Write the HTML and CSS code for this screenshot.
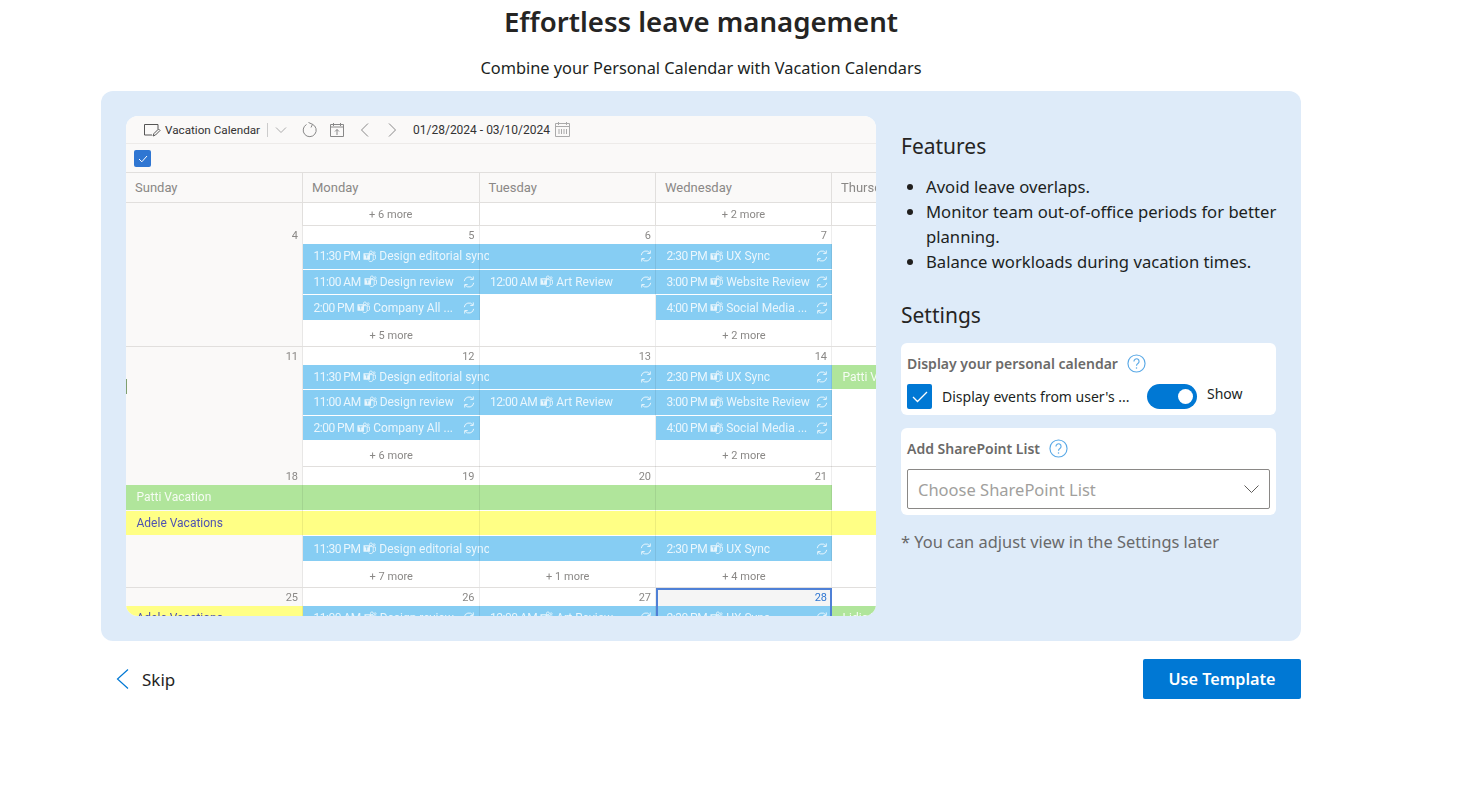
FILE: index.html
```html
<!DOCTYPE html>
<html lang="en">
<head>
    <meta charset="UTF-8">
    <title>Effortless leave management</title>
    <link rel="stylesheet" href="styles.css">
</head>
<body>
    <svg class="defs" width="0" height="0">
        <symbol id="teams" viewBox="0 0 14 14">
            <rect x="0.500" y="3.500" width="7" height="7" fill="currentColor"/>
            <path d="M2 5.200h4M4 5.200v3.800" fill="none" stroke="#86cdf3" stroke-width=".9"/>
            <path d="M7.500 5h3.500v5a2.700 2.700 0 0 1-5 1.200M11 5.500h2.500V9a1.500 1.500 0 0 1-2.500 1" fill="none" stroke="currentColor" stroke-width=".9"/>
            <circle cx="8.500" cy="2.500" r="1.500" fill="none" stroke="currentColor" stroke-width=".9"/>
            <circle cx="12" cy="3" r="1.100" fill="none" stroke="currentColor" stroke-width=".8"/>
        </symbol>
        <symbol id="sync" viewBox="0 0 14 14">
            <path d="M1.500 6a5.500 5.500 0 0 1 10-2.500M12.500 8a5.500 5.500 0 0 1-10 2.500" fill="none" stroke="currentColor" stroke-width="1.100"/>
            <path d="M12 .5v3.500H8.500M2 13.500V10h3.500" fill="none" stroke="currentColor" stroke-width="1.100"/>
        </symbol>
        <symbol id="help" viewBox="0 0 20 20">
            <circle cx="10" cy="10" r="9" fill="none" stroke="#5aa9e6" stroke-width="1.200"/>
            <path d="M7.300 7.800a2.700 2.700 0 1 1 4.200 2.200c-1 .7-1.500 1.100-1.500 2.300" fill="none" stroke="#5aa9e6" stroke-width="1.200"/>
            <circle cx="10" cy="14.800" r=".8" fill="#5aa9e6"/>
        </symbol>
    </svg>

    <main class="page">
        <h1 class="title">Effortless leave management</h1>
        <p class="subtitle">Combine your Personal Calendar with Vacation Calendars</p>

        <section class="panel">
            <div class="calendar">
                <div class="toolbar">
                    <svg class="tool-icon" width="18" height="16" viewBox="0 0 18 16"><path d="M15 7V2.500H1.500V13H9M10 14l1-2.500 4.500-4.500 1.500 1.500-4.500 4.500z" fill="none" stroke="#555"/></svg>
                    <span class="view-name">Vacation Calendar</span>
                    <span class="tool-sep"></span>
                    <svg class="tool-icon" width="12" height="8" viewBox="0 0 12 8"><path d="M1 1.500l5 5 5-5" fill="none" stroke="#aaa"/></svg>
                    <svg class="tool-icon refresh" width="15" height="16" viewBox="0 0 15 16"><path d="M4.500 2.500a6.500 6.500 0 1 0 6-.2M6.500 .5L10.500 2.300 9 5.500" fill="none" stroke="#888"/></svg>
                    <svg class="tool-icon today" width="14" height="14" viewBox="0 0 14 14"><path d="M.5 1.500h13v12H.5zM.5 4h13M3.500 0v3M10.500 0v3M7 12V6.500M5 8.500l2-2 2 2" fill="none" stroke="#888"/></svg>
                    <svg class="tool-icon prev" width="9" height="14" viewBox="0 0 9 14"><path d="M8 .5L1.500 7 8 13.500" fill="none" stroke="#888"/></svg>
                    <svg class="tool-icon next" width="9" height="14" viewBox="0 0 9 14"><path d="M1 .5L7.500 7 1 13.500" fill="none" stroke="#888"/></svg>
                    <span class="range">01/28/2024 - 03/10/2024</span>
                    <svg class="tool-icon" width="15" height="15" viewBox="0 0 15 15"><path d="M.5 1.500h14v13H.5zM.5 4.500h14M3.500 0v3M11.500 0v3M4 7v5M6.500 7v5M9 7v5M11.500 7v5" fill="none" stroke="#aaa"/></svg>
                </div>
                <div class="checkbar">
                    <span class="mini-check"><svg width="10" height="8" viewBox="0 0 10 8"><path d="M1 4l2.800 2.800L9 1" fill="none" stroke="#fff"/></svg></span>
                </div>
                <div class="headers">
                    <div class="head">Sunday</div>
                    <div class="head">Monday</div>
                    <div class="head">Tuesday</div>
                    <div class="head">Wednesday</div>
                    <div class="head">Thursday</div>
                </div>

                <div class="overflow-row">
                    <div class="cell side"></div>
                    <div class="cell more">+ 6 more</div>
                    <div class="cell"></div>
                    <div class="cell more">+ 2 more</div>
                    <div class="cell"></div>
                </div>

                <div class="week">
                    <div class="col c1 side"></div><div class="col c2"></div><div class="col c3"></div><div class="col c4"></div><div class="col c5"></div>
                    <div class="num c1">4</div><div class="num c2">5</div><div class="num c3">6</div><div class="num c4">7</div>
                    <div class="ev blue c2 w2 r1"><span class="ev-text span-text"><span class="time">11:30 PM</span> <svg class="ti"><use href="#teams"/></svg> Design editorial sync</span><svg class="si"><use href="#sync"/></svg></div>
                    <div class="ev blue c4 r1"><span class="ev-text"><span class="time">2:30 PM</span> <svg class="ti"><use href="#teams"/></svg> UX Sync</span><svg class="si"><use href="#sync"/></svg></div>
                    <div class="ev blue c2 r2"><span class="ev-text"><span class="time">11:00 AM</span> <svg class="ti"><use href="#teams"/></svg> Design review</span><svg class="si"><use href="#sync"/></svg></div>
                    <div class="ev blue c3 r2"><span class="ev-text"><span class="time">12:00 AM</span> <svg class="ti"><use href="#teams"/></svg> Art Review</span><svg class="si"><use href="#sync"/></svg></div>
                    <div class="ev blue c4 r2"><span class="ev-text"><span class="time">3:00 PM</span> <svg class="ti"><use href="#teams"/></svg> Website Review</span><svg class="si"><use href="#sync"/></svg></div>
                    <div class="ev blue c2 r3"><span class="ev-text"><span class="time">2:00 PM</span> <svg class="ti"><use href="#teams"/></svg> Company All ...</span><svg class="si"><use href="#sync"/></svg></div>
                    <div class="ev blue c4 r3"><span class="ev-text"><span class="time">4:00 PM</span> <svg class="ti"><use href="#teams"/></svg> Social Media ...</span><svg class="si"><use href="#sync"/></svg></div>
                    <div class="more c2 r4">+ 5 more</div><div class="more c4 r4">+ 2 more</div>
                    <div class="line c1"></div><div class="line c2"></div><div class="line c3"></div><div class="line c4"></div>
                </div>

                <div class="week">
                    <div class="col c1 side"></div><div class="col c2"></div><div class="col c3"></div><div class="col c4"></div><div class="col c5"></div>
                    <div class="num c1">11</div><div class="num c2">12</div><div class="num c3">13</div><div class="num c4">14</div>
                    <div class="ev blue c2 w2 r1"><span class="ev-text span-text"><span class="time">11:30 PM</span> <svg class="ti"><use href="#teams"/></svg> Design editorial sync</span><svg class="si"><use href="#sync"/></svg></div>
                    <div class="ev blue c4 r1"><span class="ev-text"><span class="time">2:30 PM</span> <svg class="ti"><use href="#teams"/></svg> UX Sync</span><svg class="si"><use href="#sync"/></svg></div>
                    <div class="ev green c5 r1"><span class="ev-text">Patti Vacation</span></div>
                    <div class="ev blue c2 r2"><span class="ev-text"><span class="time">11:00 AM</span> <svg class="ti"><use href="#teams"/></svg> Design review</span><svg class="si"><use href="#sync"/></svg></div>
                    <div class="ev blue c3 r2"><span class="ev-text"><span class="time">12:00 AM</span> <svg class="ti"><use href="#teams"/></svg> Art Review</span><svg class="si"><use href="#sync"/></svg></div>
                    <div class="ev blue c4 r2"><span class="ev-text"><span class="time">3:00 PM</span> <svg class="ti"><use href="#teams"/></svg> Website Review</span><svg class="si"><use href="#sync"/></svg></div>
                    <div class="ev blue c2 r3"><span class="ev-text"><span class="time">2:00 PM</span> <svg class="ti"><use href="#teams"/></svg> Company All ...</span><svg class="si"><use href="#sync"/></svg></div>
                    <div class="ev blue c4 r3"><span class="ev-text"><span class="time">4:00 PM</span> <svg class="ti"><use href="#teams"/></svg> Social Media ...</span><svg class="si"><use href="#sync"/></svg></div>
                    <div class="more c2 r4">+ 6 more</div><div class="more c4 r4">+ 2 more</div>
                    <div class="line c1"></div><div class="line c2"></div><div class="line c3"></div><div class="line c4"></div>
                </div>

                <div class="week">
                    <div class="col c1 side"></div><div class="col c2"></div><div class="col c3"></div><div class="col c4"></div><div class="col c5"></div>
                    <div class="num c1">18</div><div class="num c2">19</div><div class="num c3">20</div><div class="num c4">21</div>
                    <div class="ev green c1 w4 r1"><span class="ev-text">Patti Vacation</span></div>
                    <div class="ev yellow c1 w5 r2"><span class="ev-text">Adele Vacations</span></div>
                    <div class="ev blue c2 w2 r3"><span class="ev-text span-text"><span class="time">11:30 PM</span> <svg class="ti"><use href="#teams"/></svg> Design editorial sync</span><svg class="si"><use href="#sync"/></svg></div>
                    <div class="ev blue c4 r3"><span class="ev-text"><span class="time">2:30 PM</span> <svg class="ti"><use href="#teams"/></svg> UX Sync</span><svg class="si"><use href="#sync"/></svg></div>
                    <div class="more c2 r4">+ 7 more</div><div class="more c3 r4">+ 1 more</div><div class="more c4 r4">+ 4 more</div>
                    <div class="line c1"></div><div class="line c2"></div><div class="line c3"></div><div class="line c4"></div>
                </div>

                <div class="week">
                    <div class="col c1 side"></div><div class="col c2"></div><div class="col c3"></div><div class="col c4"></div><div class="col c5"></div>
                    <div class="num c1">25</div><div class="num c2">26</div><div class="num c3">27</div><div class="num c4 today-num">28</div>
                    <div class="ev yellow c1 r1"><span class="ev-text">Adele Vacations</span></div>
                    <div class="ev blue c2 r1"><span class="ev-text"><span class="time">11:00 AM</span> <svg class="ti"><use href="#teams"/></svg> Design review</span><svg class="si"><use href="#sync"/></svg></div>
                    <div class="ev blue c3 r1"><span class="ev-text"><span class="time">12:00 AM</span> <svg class="ti"><use href="#teams"/></svg> Art Review</span><svg class="si"><use href="#sync"/></svg></div>
                    <div class="ev blue c4 r1"><span class="ev-text"><span class="time">2:30 PM</span> <svg class="ti"><use href="#teams"/></svg> UX Sync</span><svg class="si"><use href="#sync"/></svg></div>
                    <div class="ev green c5 r1"><span class="ev-text">Lidia Vacation</span></div>
                    <div class="line c1"></div><div class="line c2"></div><div class="line c3"></div>
                    <div class="today-box c4"></div>
                </div>
                <span class="edge-mark"></span>
            </div>

            <div class="side-panel">
                <h2 class="side-title">Features</h2>
                <ul class="features">
                    <li>Avoid leave overlaps.</li>
                    <li>Monitor team out-of-office periods for better planning.</li>
                    <li>Balance workloads during vacation times.</li>
                </ul>
                <h2 class="side-title settings-title">Settings</h2>
                <div class="setting first-setting">
                    <div class="setting-label">Display your personal calendar <svg class="help"><use href="#help"/></svg></div>
                    <div class="setting-row">
                        <span class="check"><svg width="16" height="12" viewBox="0 0 16 12"><path d="M1 6l4.500 4.500L15 1" fill="none" stroke="#fff" stroke-width="1.300"/></svg></span>
                        <span class="check-label">Display events from user's ...</span>
                        <span class="toggle"><span class="knob"></span></span>
                        <span class="toggle-label">Show</span>
                    </div>
                </div>
                <div class="setting second-setting">
                    <div class="setting-label">Add SharePoint List <svg class="help"><use href="#help"/></svg></div>
                    <div class="select">
                        <span>Choose SharePoint List</span>
                        <svg width="15" height="8" viewBox="0 0 15 8"><path d="M.5 .5l7 7 7-7" fill="none" stroke="#605e5c"/></svg>
                    </div>
                </div>
                <p class="note">* You can adjust view in the Settings later</p>
            </div>
        </section>

        <div class="footer">
            <a class="skip">
                <svg width="13" height="20" viewBox="0 0 13 20"><path d="M12 .5L1.500 10 12 19.500" fill="none" stroke="#0078d4" stroke-width="1.200"/></svg>
                Skip
            </a>
            <button class="use-btn">Use Template</button>
        </div>
    </main>
</body>
</html>
```

FILE: styles.css
```css
* {
    box-sizing: border-box;
}
html, body {
    margin: 0;
    padding: 0;
    height: 100%;
    overflow: hidden;
    background: #fff;
}
body {
    font-family: "Noto Sans", "Open Sans", sans-serif;
    color: #201f1e;
}
.defs {
    position: absolute;
}
.page {
    width: 1200px;
    margin-left: 101px;
}
.title {
    margin: 0;
    height: 43px;
    line-height: 43px;
    font-size: 27.600px;
    font-weight: 600;
    text-align: center;
    color: #252423;
}
.subtitle {
    margin: 0;
    padding-top: 14px;
    height: 48px;
    line-height: 22px;
    font-size: 16.330px;
    text-align: center;
}
.panel {
    display: flex;
    gap: 25px;
    height: 550px;
    padding: 25px;
    background: #deebf9;
    border-radius: 12px;
}

/* calendar picture */
.calendar {
    width: 750px;
    height: 500px;
    flex: none;
    position: relative;
    overflow: hidden;
    border-radius: 12px;
    background: #fff;
    font-family: Roboto, "Noto Sans", sans-serif;
    font-size: 12px;
    color: #666;
    filter: blur(.35px);
}
.toolbar {
    display: flex;
    align-items: center;
    height: 28px;
    padding-left: 17px;
    background: #faf9f8;
    border-bottom: 1px solid #edebe9;
    color: #333;
    font-size: 12px;
}
.tool-icon {
    flex: none;
}
.view-name {
    margin-left: 4px;
    width: 96px;
    font-size: 11.700px;
    white-space: nowrap;
}
.tool-sep {
    width: 1px;
    height: 14px;
    margin: 0 7px 0 6px;
    background: #ccc;
}
.refresh {
    margin-left: 15px;
}
.today {
    margin-left: 13px;
}
.prev {
    margin-left: 16px;
}
.next {
    margin-left: 19px;
}
.range {
    width: 136px;
    margin: 0 6px 0 16px;
    white-space: nowrap;
}
.checkbar {
    height: 29px;
    padding: 6px 0 0 8px;
    background: #faf9f8;
    border-bottom: 1px solid #e1dfdd;
}
.mini-check {
    display: flex;
    align-items: center;
    justify-content: center;
    width: 17px;
    height: 17px;
    border-radius: 2px;
    background: #2f76d2;
}
.headers, .overflow-row {
    display: grid;
    grid-template-columns: 177px 176.500px 176.500px 176px 44px;
}
.headers {
    height: 30px;
    background: #faf9f8;
    border-bottom: 1px solid #e1dfdd;
}
.head {
    padding: 7px 0 0 9px;
    font-size: 13px;
    color: #8a8886;
    border-right: 1px solid #e1dfdd;
    white-space: nowrap;
    overflow: hidden;
}
.head:last-child {
    border-right: none;
}
.overflow-row {
    height: 23px;
    border-bottom: 1px solid #e1dfdd;
}
.cell {
    border-right: 1px solid #e1dfdd;
}
.cell:last-child {
    border-right: none;
}
.side {
    background: #faf9f8;
}
.more {
    font-size: 11px;
    line-height: 23px;
    text-align: center;
    color: #8a8886;
}
.more.r4 {
    padding-top: 3px;
}
.week {
    display: grid;
    grid-template-columns: 177px 176.500px 176.500px 176px 44px;
    grid-template-rows: 18px 25.670px 25.670px 25.670px 25.500px;
    height: 120.500px;
    border-bottom: 1px solid #e1dfdd;
}
.col, .line {
    grid-row: 1 / -1;
}
.line {
    border-right: 1px solid rgba(0, 0, 0, .07);
}
.num {
    grid-row: 1;
    padding: 3px 5px 0 0;
    text-align: right;
    font-size: 11px;
    line-height: 14px;
    color: #8a8886;
}
.c1 { grid-column: 1; }
.c2 { grid-column: 2; }
.c3 { grid-column: 3; }
.c4 { grid-column: 4; }
.c5 { grid-column: 5; }
.w2 { grid-column-end: span 2; }
.w4 { grid-column-end: span 4; }
.w5 { grid-column-end: span 5; }
.r1 { grid-row: 2; }
.r2 { grid-row: 3; }
.r3 { grid-row: 4; }
.r4 { grid-row: 5; }
.ev {
    display: flex;
    align-items: center;
    justify-content: space-between;
    height: 24.670px;
    padding: 0 4.500px 0 10.500px;
    font-size: 12px;
    white-space: nowrap;
    overflow: hidden;
}
.ev-text {
    display: block;
    flex: none;
}
.span-text {
    width: 175.500px;
    overflow: hidden;
}
.time {
    letter-spacing: -.5px;
}
.blue {
    background: #86cdf3;
    color: rgba(255, 255, 255, .82);
}
.green {
    background: #b0e59b;
    color: rgba(255, 255, 255, .88);
}
.yellow {
    background: #ffff85;
    color: #4f52b2;
}
.ti {
    width: 13px;
    height: 13px;
    vertical-align: -2.500px;
}
.si {
    flex: none;
    width: 12px;
    height: 12px;
    color: #fff;
    opacity: .85;
    margin-left: auto;
}
.today-num {
    color: #2f76d2;
    background: #f5f5f5;
}
.today-box {
    grid-row: 1 / -1;
    border: 2px solid #4f80d6;
    border-bottom: none;
    pointer-events: none;
}
.edge-mark {
    position: absolute;
    left: 0;
    top: 263px;
    width: 1px;
    height: 15px;
    background: #7f9f6f;
}

/* right column */
.side-panel {
    flex: 1;
    min-width: 0;
}
.side-title {
    margin: 16px 0 0;
    font-size: 21px;
    line-height: 28px;
    font-weight: 400;
    color: #252423;
}
.features {
    margin: 14px -6px 0 0;
    padding-left: 25px;
    font-size: 16.650px;
    line-height: 25px;
}
.settings-title {
    margin-top: 27px;
}
.setting {
    padding: 0 6px;
    background: #fff;
    border-radius: 6px;
}
.first-setting {
    height: 72px;
    margin-top: 14px;
}
.second-setting {
    height: 87px;
    margin-top: 13px;
}
.setting-label {
    display: flex;
    align-items: center;
    gap: 9px;
    height: 41px;
    font-size: 14px;
    font-weight: 600;
    color: #6b6a69;
}
.help {
    width: 19px;
    height: 19px;
}
.setting-row {
    display: flex;
    align-items: center;
}
.check {
    display: flex;
    align-items: center;
    justify-content: center;
    width: 25px;
    height: 25px;
    background: #0078d4;
    border-radius: 2px;
}
.check-label {
    margin-left: 10px;
    width: 205px;
    font-size: 14px;
}
.toggle {
    display: flex;
    align-items: center;
    justify-content: flex-end;
    width: 50px;
    height: 25px;
    padding-right: 4px;
    border-radius: 13px;
    background: #0078d4;
}
.knob {
    width: 15px;
    height: 15px;
    border-radius: 50%;
    background: #fff;
}
.toggle-label {
    margin-left: 10px;
    padding-bottom: 6px;
    font-size: 14px;
}
.select {
    display: flex;
    align-items: center;
    justify-content: space-between;
    height: 40px;
    padding: 0 10px;
    border: 1px solid #8a8886;
    border-radius: 2px;
    font-size: 16.500px;
    color: #a19f9d;
}
.note {
    margin: 16px 0 0;
    font-size: 16.400px;
    line-height: 22px;
    color: #69696a;
}

/* bottom actions */
.footer {
    display: flex;
    align-items: center;
    justify-content: space-between;
    margin-top: 18px;
    height: 40px;
}
.skip {
    display: flex;
    align-items: center;
    gap: 13px;
    padding-left: 15px;
    font-size: 17px;
    color: #252423;
}
.use-btn {
    width: 158px;
    height: 40px;
    border: none;
    border-radius: 2px;
    background: #0078d4;
    color: #fff;
    font-family: inherit;
    font-size: 16.200px;
    font-weight: 600;
}
```
